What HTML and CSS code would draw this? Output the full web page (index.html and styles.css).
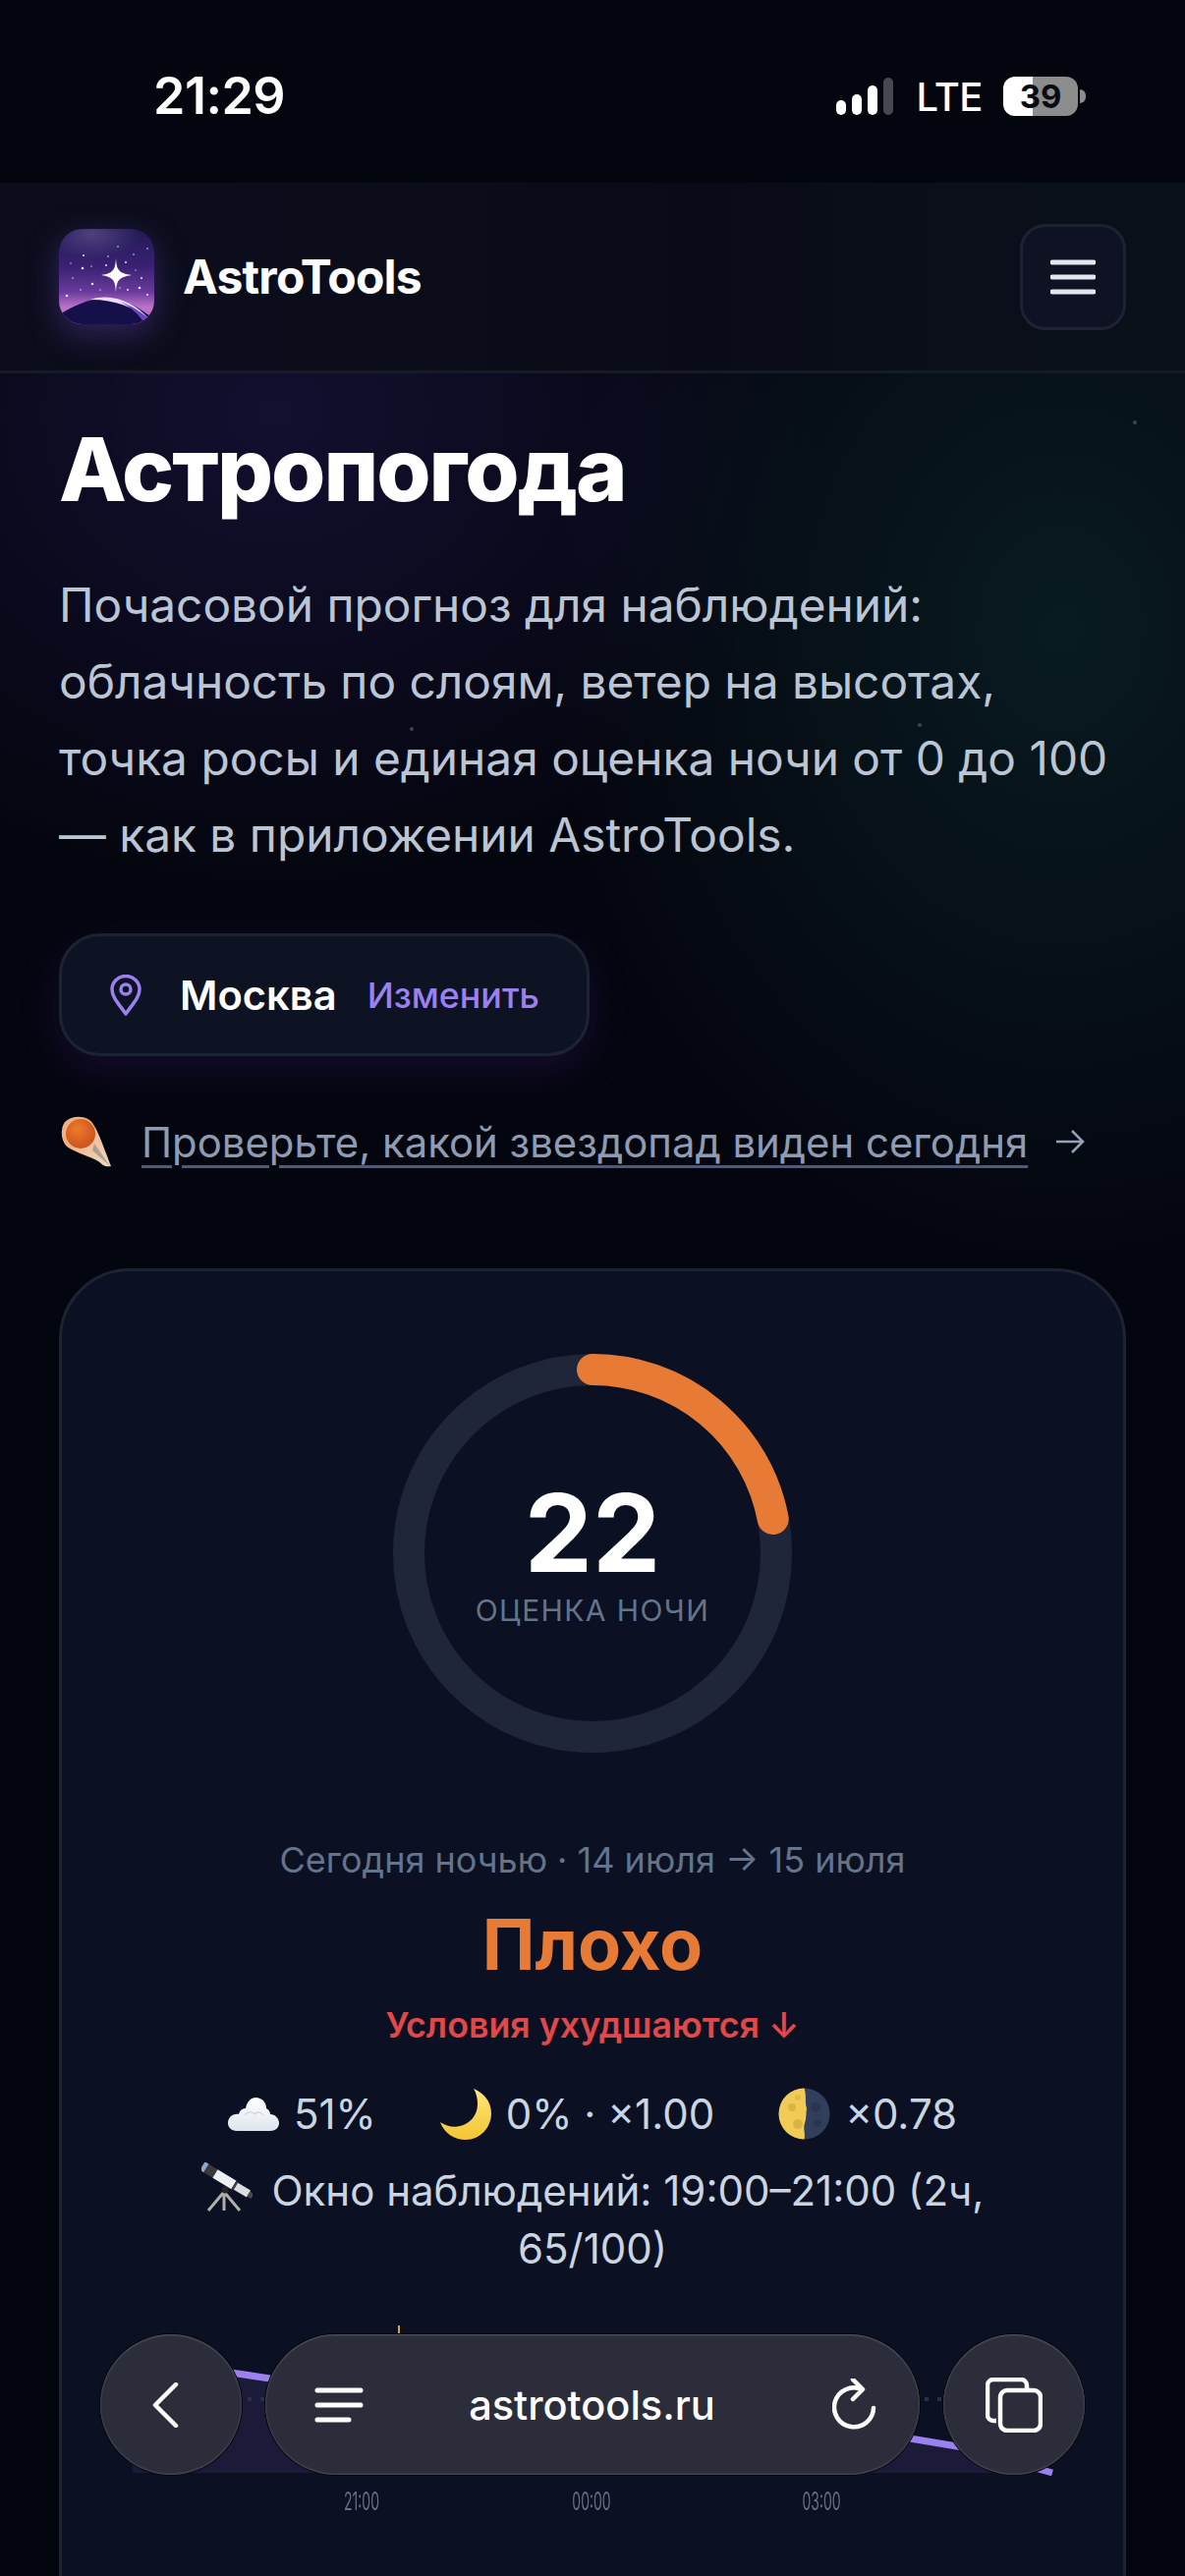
FILE: index.html
```html
<!DOCTYPE html>
<html lang="en">

<head>
    <meta charset="UTF-8">
    <meta name="viewport" content="width=device-width, initial-scale=1.0">
    <title>AstroTools</title>
    <link rel="stylesheet" href="styles.css">
</head>

<body>
    <div class="page">
        <div class="statusbar">
            <span class="clock">21:29</span>
            <div class="status-right">
                <svg class="signal" width="58" height="38" viewBox="0 0 58 38">
                    <rect x="0" y="23" width="10" height="15" rx="5" fill="#fff"/>
                    <rect x="16" y="17" width="10" height="21" rx="5" fill="#fff"/>
                    <rect x="32" y="8" width="10" height="30" rx="5" fill="#fff"/>
                    <rect x="48" y="0" width="10" height="38" rx="5" fill="#46484f"/>
                </svg>
                <span class="lte">LTE</span>
                <div class="battery"><span>39</span></div>
                <span class="battery-nub"></span>
            </div>
        </div>

        <header class="topbar">
            <div class="brand">
                <svg class="logo" width="97" height="97" viewBox="0 0 97 97">
                    <defs>
                        <linearGradient id="logoSky" x1="0" y1="0" x2="0" y2="1">
                            <stop offset="0" stop-color="#221a55"/>
                            <stop offset="0.4" stop-color="#3a2272"/>
                            <stop offset="0.66" stop-color="#6a3a9c"/>
                            <stop offset="0.82" stop-color="#bb72c8"/>
                        </linearGradient>
                        <radialGradient id="logoHaze" cx="0.35" cy="0.1" r="0.5">
                            <stop offset="0" stop-color="#6a5a98" stop-opacity="0.6"/>
                            <stop offset="1" stop-color="#6a5a98" stop-opacity="0"/>
                        </radialGradient>
                        <clipPath id="logoClip"><rect width="97" height="97" rx="24"/></clipPath>
                    </defs>
                    <g clip-path="url(#logoClip)">
                        <rect width="97" height="97" fill="url(#logoSky)"/>
                        <rect width="97" height="50" fill="url(#logoHaze)"/>
                        <g fill="#e8dcff">
                            <circle cx="25" cy="27" r="1"/><circle cx="24" cy="40" r="1.300"/><circle cx="34" cy="56" r="1.300"/>
                            <circle cx="8" cy="68" r="1.300"/><circle cx="68" cy="34" r="1"/><circle cx="84" cy="50" r="1"/>
                            <circle cx="82" cy="60" r="1.300"/><circle cx="90" cy="67" r="1"/><circle cx="50" cy="28" r="0.800"/>
                            <circle cx="14" cy="50" r="0.800"/><circle cx="70" cy="62" r="1"/><circle cx="90" cy="20" r="0.800"/>
                            <circle cx="48" cy="37" r="1"/><circle cx="60" cy="18" r="0.800"/><circle cx="22" cy="62" r="0.800"/>
                            <circle cx="76" cy="26" r="0.800"/><circle cx="33" cy="38" r="0.700"/><circle cx="12" cy="35" r="0.700"/>
                            <circle cx="42" cy="62" r="0.700"/><circle cx="62" cy="60" r="0.700"/><circle cx="78" cy="42" r="0.700"/>
                        </g>
                        <path d="M58 30 C58.800 41 60 45 74 47 C60 49 58.800 53 58 65 C57.200 53 56 49 43 47 C56 45 57.200 41 58 30 Z" fill="#fff"/>
                        <circle cx="58" cy="47" r="5" fill="#fff"/>
                        <path d="M4 85 C22 74 40 69 52 70 C66 71 82 80 97 92 L97 97 L0 97 Z" fill="#16104a"/>
                        <path d="M32 72 C54 65 76 74 92 92 C76 80 58 72 32 72 Z" fill="#e9dcff"/>
                        <path d="M62 74 C74 78 86 86 92 92 L88 97 C82 88 74 80 62 74 Z" fill="#6a45c0"/>
                    </g>
                </svg>
                <span class="brand-name">AstroTools</span>
            </div>
            <button class="menu-btn">
                <svg width="46" height="36" viewBox="0 0 46 36"><path d="M2 3H44M2 18H44M2 33H44" stroke="#e2e8f0" stroke-width="5" stroke-linecap="round"/></svg>
            </button>
        </header>

        <main class="content">
            <span class="spark spark-a"></span>
            <span class="spark spark-b"></span>
            <span class="spark spark-c"></span>
            <h1>Астропогода</h1>
            <p class="lead">Почасовой прогноз для наблюдений: облачность по слоям, ветер на высотах, точка росы и единая оценка ночи от 0 до 100 — как в приложении AstroTools.</p>

            <div class="location">
                <svg width="34" height="42" viewBox="0 0 34 42" fill="none" stroke="#9b80f0" stroke-width="3.500">
                    <path d="M17 40 C10 30 3 23 3 15 A14 13.500 0 0 1 31 15 C31 23 24 30 17 40 Z" stroke-linejoin="round"/>
                    <circle cx="17" cy="15" r="5"/>
                </svg>
                <span class="city">Москва</span>
                <span class="change">Изменить</span>
            </div>

            <div class="meteor-line">
                <svg width="56" height="56" viewBox="0 0 56 56">
                    <defs>
                        <radialGradient id="meteorHead" cx="0.4" cy="0.35" r="0.7"><stop offset="0" stop-color="#ee7a2a"/><stop offset="1" stop-color="#c8501c"/></radialGradient>
                        <linearGradient id="meteorTail" x1="0.3" y1="0.3" x2="1" y2="1"><stop offset="0" stop-color="#f0b184"/><stop offset="1" stop-color="#efdcc0"/></linearGradient>
                    </defs>
                    <path d="M6 8 C12 2 24 1 31 6 C38 11 44 30 53 53 C48 54 46 53 40 48 C32 43 18 40 8 33 C2 27 1 15 6 8 Z" fill="url(#meteorTail)"/>
                    <path d="M36 30 L52 53 L34 37 Z" fill="#8f8e8c" opacity="0.7"/>
                    <circle cx="22" cy="20" r="15" fill="url(#meteorHead)"/>
                </svg>
                <a class="meteor-link">Проверьте, какой звездопад виден сегодня</a>
                <svg class="arrow" width="30" height="26" viewBox="0 0 30 26" fill="none" stroke="#94a3b8" stroke-width="2.500"><path d="M1 13H28M17 2L28 13L17 24"/></svg>
            </div>

            <section class="card">
                <div class="ring">
                    <svg width="406" height="406" viewBox="0 0 406 406">
                        <circle cx="203" cy="203" r="187" fill="none" stroke="#20263a" stroke-width="32"/>
                        <circle cx="203" cy="203" r="187" fill="none" stroke="#e77b36" stroke-width="32" stroke-linecap="round" stroke-dasharray="258.500 1175" transform="rotate(-90 203 203)"/>
                    </svg>
                    <div class="ring-text">
                        <div class="score">22</div>
                        <div class="score-label">ОЦЕНКА НОЧИ</div>
                    </div>
                </div>

                <div class="night-date">Сегодня ночью · 14 июля → 15 июля</div>
                <div class="verdict">Плохо</div>
                <div class="trend">Условия ухудшаются ↓</div>

                <div class="stats">
                    <span class="stat">
                        <svg width="52" height="36" viewBox="0 0 52 36">
                            <defs><linearGradient id="cloudFill" x1="0" y1="0" x2="0" y2="1"><stop offset="0" stop-color="#fff"/><stop offset="1" stop-color="#dfe4ee"/></linearGradient></defs>
                            <path d="M9 35 C3 35 0 31 0 27 C0 21 5 17 11 18 C12 14 15 12 18 12 C19 5 24 1 28 1 C35 1 39 6 39 12 C41 13 43 15 43 18 C48 18 52 22 52 27 C52 32 48 35 43 35 Z" fill="url(#cloudFill)"/>
                            <path d="M17 19 C20 15 25 15 27 18 C30 15 34 16 36 19" fill="none" stroke="#ccd2df" stroke-width="1.200"/>
                        </svg>
                        51%
                    </span>
                    <span class="stat">
                        <svg width="52" height="52" viewBox="0 0 52 52">
                            <defs><linearGradient id="moonFill" x1="0" y1="0" x2="0" y2="1"><stop offset="0" stop-color="#ffe680"/><stop offset="1" stop-color="#f3c530"/></linearGradient></defs>
                            <path d="M34 0 C44 4 52 13 52 25 C52 40 40 52 26 52 C14 52 4 45 0 34 C6 38 14 40 20 38 C30 36 38 27 38 16 C38 10 37 5 34 0 Z" fill="url(#moonFill)"/>
                        </svg>
                        0% · ×1.00
                    </span>
                    <span class="stat">
                        <svg width="53" height="53" viewBox="0 0 53 53">
                            <circle cx="26.500" cy="26.500" r="26" fill="#323f5c"/>
                            <path d="M26.500 0.500 A26 26 0 0 0 26.500 52.500 C28 46 25 42 27 36 C29 31 28 26 29 21 C27 15 29 8 26.500 0.500 Z" fill="#f1cb56"/>
                            <circle cx="14" cy="20" r="4" fill="#dcb446"/><circle cx="20" cy="37" r="5" fill="#dcb446"/><circle cx="20" cy="10" r="3" fill="#e2bc4c"/>
                            <circle cx="38" cy="20" r="5" fill="#2a3550"/><circle cx="40" cy="36" r="4" fill="#2a3550"/>
                        </svg>
                        ×0.78
                    </span>
                </div>

                <div class="window">
                    <svg class="scope" width="52" height="50" viewBox="0 0 52 50">
                        <path d="M23 30 L7 49M23 30V49M23 30L39 49" stroke="#aeaeaa" stroke-width="3" fill="none"/>
                        <g fill="none" stroke-width="10">
                            <path d="M1 3.500 L5 6" stroke="#8fa6cf"/>
                            <path d="M5 6 L14 11.500" stroke="#3a3a3e"/>
                            <path d="M14 11.500 L33 23" stroke="#eeeff2"/>
                            <path d="M33 23 L35 24.200" stroke="#3a3a3e"/>
                            <path d="M35 24.200 L48 32" stroke="#dcdde0" stroke-width="8"/>
                            <path d="M48 32 L52 34.500" stroke="#48484c" stroke-width="6"/>
                        </g>
                        <circle cx="24" cy="28" r="3.500" fill="#26262a"/>
                    </svg>
                    Окно наблюдений: 19:00–21:00 (2ч, 65/100)
                </div>

                <div class="chart">
                    <svg class="chart-svg" width="938" height="150" viewBox="0 0 938 150">
                        <path d="M0 66 L100 48 L140 54 C350 70 650 90 791 115 L839 123 L936 150 H0 Z" fill="#1b1a38"/>
                        <path d="M0 75 H938" stroke="#2a3045" stroke-width="4" stroke-dasharray="4 9"/>
                        <path d="M271 0 V12" stroke="#d9a441" stroke-width="2"/>
                        <path d="M100 48 L140 54 M791 115 L839 123 L936 150" stroke="#9b80f0" stroke-width="7" fill="none"/>
                    </svg>
                    <div class="chart-hours"><span>21:00</span><span>00:00</span><span>03:00</span></div>
                </div>
            </section>
        </main>

        <nav class="toolbar">
            <div class="tool-round tool-back">
                <svg width="30" height="46" viewBox="0 0 30 46" fill="none" stroke="#fff" stroke-width="4.500" stroke-linecap="round" stroke-linejoin="round"><path d="M25 2L4 23L25 44"/></svg>
            </div>
            <div class="url-pill">
                <svg width="50" height="38" viewBox="0 0 50 38" fill="none" stroke="#fff" stroke-width="5" stroke-linecap="round"><path d="M3 4H47M3 19H47M3 34H35"/></svg>
                <span class="url">astrotools.ru</span>
                <svg width="46" height="54" viewBox="0 0 46 54" fill="none" stroke="#fff" stroke-width="4.500" stroke-linecap="round" stroke-linejoin="round"><path d="M30 11 A20 20 0 1 0 42 30"/><path d="M21 1L31 11L21 21"/></svg>
            </div>
            <div class="tool-round">
                <svg width="58" height="56" viewBox="0 0 58 56" fill="none" stroke="#fff" stroke-width="4.500"><path d="M11 44 H8 A6 6 0 0 1 2 38 V8 A6 6 0 0 1 8 2 H36 A6 6 0 0 1 42 8 V11"/><rect x="15" y="13" width="41" height="41" rx="7"/></svg>
            </div>
        </nav>
    </div>
</body>
</html>
```

FILE: styles.css
```css
* {
    box-sizing: border-box;
}
html, body {
    margin: 0;
    padding: 0;
    background: #04060c;
}
body {
    font-family: Inter, "Liberation Sans", sans-serif;
    color: #fff;
}
.page {
    position: relative;
    width: 1206px;
    height: 2622px;
    overflow: hidden;
    background:
        radial-gradient(ellipse 560px 480px at 280px 420px, rgba(64, 44, 150, 0.24), transparent 100%),
        radial-gradient(ellipse 520px 640px at 1080px 640px, rgba(20, 80, 76, 0.28), transparent 100%),
        #04060f;
}

/* status bar */
.statusbar {
    height: 186px;
    padding: 0 101px 0 156px;
    display: flex;
    align-items: flex-start;
    justify-content: space-between;
    background: #04060f;
}
.clock {
    margin-top: 68px;
    font-size: 52px;
    font-weight: 600;
    line-height: 60px;
    letter-spacing: -0.5px;
}
.status-right {
    display: flex;
    align-items: center;
    margin-top: 78px;
    height: 40px;
}
.signal {
    margin-right: 23px;
}
.lte {
    font-size: 40px;
    font-weight: 500;
    margin-right: 21px;
    letter-spacing: -0.5px;
}
.battery {
    width: 76px;
    height: 40px;
    border-radius: 12px;
    background: linear-gradient(90deg, #fff 0 40%, #8c8c8c 40%);
    display: flex;
    align-items: center;
    justify-content: center;
    color: #0a0b10;
    font-size: 33px;
    font-weight: 700;
}
.battery-nub {
    width: 6px;
    height: 14px;
    margin-left: 2px;
    border-radius: 0 6px 6px 0;
    background: #8c8c8c;
}

/* header */
.topbar {
    height: 194px;
    padding: 0 60px;
    display: flex;
    align-items: center;
    justify-content: space-between;
    background: linear-gradient(90deg, #0b0d1c, #090c18 60%, #0a1119);
    border-bottom: 3px solid #171b28;
}
.brand {
    display: flex;
    align-items: center;
    gap: 29px;
}
.logo {
    filter: drop-shadow(0 10px 16px rgba(110, 70, 190, 0.4));
}
.brand-name {
    font-size: 48px;
    font-weight: 700;
    letter-spacing: -0.8px;
}
.menu-btn {
    width: 108px;
    height: 108px;
    padding: 0;
    display: flex;
    align-items: center;
    justify-content: center;
    background: #0e1222;
    border: 3px solid #1e2333;
    border-radius: 26px;
}

/* intro */
.content {
    position: relative;
    padding: 46px 60px 0;
}
.spark {
    position: absolute;
    width: 4px;
    height: 4px;
    border-radius: 50%;
    background: #3a4658;
}
.spark-a { left: 1153px; top: 48px; }
.spark-b { left: 417px; top: 360px; }
.spark-c { left: 934px; top: 356px; }
h1 {
    margin: 0;
    font-size: 89.5px;
    font-weight: 800;
    line-height: 104px;
    letter-spacing: -2px;
}
.lead {
    margin: 47px 0 0;
    width: 1070px;
    font-size: 47.8px;
    line-height: 78px;
    color: #bcc5d3;
}
.location {
    margin-top: 61px;
    width: 540px;
    height: 125px;
    padding-left: 48px;
    display: flex;
    align-items: center;
    background: #0d1322;
    border: 3px solid #1e2333;
    border-radius: 42px;
    box-shadow: 0 14px 40px rgba(90, 40, 170, 0.2);
}
.city {
    margin-left: 38px;
    font-size: 41.7px;
    font-weight: 600;
}
.change {
    margin-left: 31px;
    font-size: 35.8px;
    font-weight: 500;
    color: #9b80f0;
}
.meteor-line {
    margin-top: 59px;
    display: flex;
    align-items: center;
}
.meteor-link {
    margin-left: 28px;
    font-size: 41.85px;
    color: #8e9bb2;
    text-decoration: underline;
    text-decoration-color: #4f5b75;
    text-decoration-thickness: 3px;
    text-underline-offset: 8px;
}
.arrow {
    margin-left: 28px;
}

/* score card */
.card {
    margin-top: 101px;
    width: 1086px;
    height: 1400px;
    padding-top: 84px;
    background: #0b1122;
    border: 3px solid #1e2333;
    border-radius: 72px;
    display: flex;
    flex-direction: column;
    align-items: center;
}
.ring {
    position: relative;
    width: 406px;
    height: 406px;
    flex: none;
}
.ring-text {
    position: absolute;
    inset: 0;
    display: flex;
    flex-direction: column;
    align-items: center;
    justify-content: center;
}
.score {
    font-size: 110px;
    font-weight: 700;
    line-height: 114px;
    margin-top: 2px;
}
.score-label {
    font-size: 30px;
    line-height: 44px;
    letter-spacing: 1.4px;
    color: #64748b;
}
.night-date {
    margin-top: 87px;
    font-size: 36px;
    line-height: 44px;
    color: #64748b;
}
.verdict {
    margin-top: 20px;
    font-size: 72px;
    font-weight: 700;
    line-height: 88px;
    color: #e77b36;
}
.trend {
    margin-top: 16px;
    font-size: 35.8px;
    font-weight: 600;
    line-height: 44px;
    color: #e0484a;
}
.stats {
    margin-top: 42px;
    display: flex;
    gap: 65px;
    align-items: center;
    font-size: 42px;
    color: #cbd5e1;
}
.stat {
    display: flex;
    align-items: center;
    gap: 15px;
}
.window {
    margin-top: 22px;
    width: 960px;
    font-size: 42px;
    line-height: 59px;
    text-align: center;
    color: #cbd5e1;
}
.scope {
    vertical-align: -6px;
    margin-right: 8px;
}
.chart {
    align-self: flex-start;
    margin: 49px 0 0 72px;
}
.chart-svg {
    display: block;
    overflow: visible;
}
.chart-hours {
    position: relative;
    display: grid;
    grid-template-columns: repeat(3, 234px);
    margin: 14px 0 0 116px;
    font-size: 25px;
    color: #666f82;
}
.chart-hours span {
    text-align: center;
    transform: scaleX(0.56);
}

/* floating browser bar */
.toolbar {
    position: absolute;
    left: 102px;
    top: 2376px;
    width: 1002px;
    height: 143px;
    display: flex;
    justify-content: space-between;
}
.tool-round {
    width: 144px;
    height: 143px;
    display: flex;
    align-items: center;
    justify-content: center;
    border-radius: 50%;
    background: #2c2d3a;
    box-shadow: inset 0 1px 2px rgba(255, 255, 255, 0.22), inset 0 -1px 2px rgba(255, 255, 255, 0.16), 0 0 0 1px #05060c;
}
.tool-back svg {
    margin-right: 10px;
}
.url-pill {
    width: 666px;
    height: 143px;
    padding: 0 43px 0 50px;
    display: flex;
    align-items: center;
    justify-content: space-between;
    border-radius: 72px;
    background: #2c2d3a;
    box-shadow: inset 0 1px 2px rgba(255, 255, 255, 0.22), inset 0 -1px 2px rgba(255, 255, 255, 0.16), 0 0 0 1px #05060c;
}
.url {
    margin-right: 12px;
    font-size: 41.5px;
    font-weight: 500;
    color: #fff;
}
```
